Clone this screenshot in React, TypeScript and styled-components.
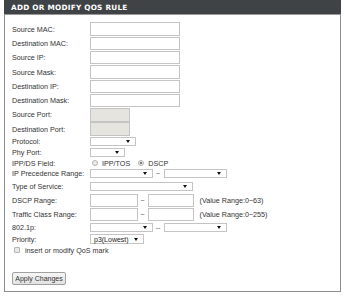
import { createGlobalStyle } from "styled-components";
import styled from "styled-components";

const GlobalStyle = createGlobalStyle`
    html, body {
        margin: 0;
        padding: 0;
        background: #ffffff;
    }
    body {
        font-family: "Liberation Sans", Arial, sans-serif;
        color: #333333;
    }
`;

const Wrapper = styled.div`
    width: 337px;
    margin-left: 4px;
`;

const Header = styled.div`
    height: 14px;
    background-color: #3f4346;
    border-bottom: 1px solid #9a9a9a;
    display: flex;
    align-items: center;
    padding-left: 7px;
    color: #ffffff;
    font-family: "DejaVu Sans", Verdana, sans-serif;
    font-weight: bold;
    font-size: 7.3px;
    letter-spacing: 0.25px;
`;

const Body = styled.div`
    border: 1px solid #8e8e8e;
    border-top: none;
    padding: 7px 0 6px 7px;
    display: flex;
    flex-direction: column;
`;

const Row = styled.div<{ $h: number }>`
    display: flex;
    align-items: center;
    height: ${(p) => p.$h}px;
    font-size: 7.2px;
`;

const Label = styled.div`
    width: 78px;
    flex-shrink: 0;
    white-space: nowrap;
`;

const TextInput = styled.input<{ $w: number; $h?: number; $disabled?: boolean }>`
    box-sizing: border-box;
    width: ${(p) => p.$w}px;
    height: ${(p) => p.$h ?? 13.5}px;
    margin: 0;
    padding: 0 2px;
    border: 1px solid #c4c4c4;
    background-color: ${(p) => (p.$disabled ? "#e6e4df" : "#ffffff")};
    font-size: 7px;
    outline: none;
`;

const SelectWrap = styled.div<{ $w: number; $h?: number }>`
    position: relative;
    box-sizing: border-box;
    width: ${(p) => p.$w}px;
    height: ${(p) => p.$h ?? 9}px;
    border: 1px solid #c4c4c4;
    background: #ffffff;
    display: flex;
    align-items: center;

    &::after {
        content: "";
        position: absolute;
        right: 5px;
        top: 50%;
        margin-top: -1.5px;
        border-left: 2px solid transparent;
        border-right: 2px solid transparent;
        border-top: 3px solid #111111;
    }
`;

const SelectText = styled.span`
    padding-left: 3px;
    font-size: 7px;
    color: #222222;
    line-height: 1;
`;

const Sep = styled.span<{ $w: number }>`
    width: ${(p) => p.$w}px;
    text-align: center;
    font-size: 7px;
    color: #555555;
`;

const Hint = styled.span`
    margin-left: 6px;
    white-space: nowrap;
`;

const Radio = styled.span<{ $checked?: boolean }>`
    box-sizing: border-box;
    width: 6px;
    height: 6px;
    border-radius: 50%;
    border: 1px solid #b5b5b5;
    background: #ececec;
    display: inline-flex;
    align-items: center;
    justify-content: center;
    margin: 0 4px 0 2px;

    &::before {
        content: "";
        width: 2px;
        height: 2px;
        border-radius: 50%;
        background: ${(p) => (p.$checked ? "#555555" : "transparent")};
    }
`;

const RadioText = styled.span`
    margin-right: 6px;
`;

const CheckBox = styled.span`
    box-sizing: border-box;
    width: 6px;
    height: 6px;
    border: 1px solid #b5b5b5;
    border-radius: 1px;
    background: #e8e8e8;
    margin: 0 5px 0 2px;
`;

const ButtonRow = styled.div`
    margin-top: 16.5px;
    display: flex;
    padding-left: 0;
`;

const Button = styled.button`
    box-sizing: border-box;
    width: 54px;
    height: 13px;
    margin: 0;
    padding: 0;
    border: 1px solid #a0a0a0;
    border-radius: 2px;
    background: linear-gradient(#f6f6f6, #e2e2e2);
    font-family: "Liberation Sans", Arial, sans-serif;
    font-size: 7px;
    color: #333333;
`;

const textRows = [
    "Source MAC:",
    "Destination MAC:",
    "Source IP:",
    "Source Mask:",
    "Destination IP:",
    "Destination Mask:",
];

export default function App() {
    return (
        <>
            <GlobalStyle />
            <Wrapper>
                <Header>ADD OR MODIFY QOS RULE</Header>
                <Body>
                    {textRows.map((label) => (
                        <Row $h={14.3} key={label}>
                            <Label>{label}</Label>
                            <TextInput $w={90} />
                        </Row>
                    ))}
                    <Row $h={14.3}>
                        <Label>Source Port:</Label>
                        <TextInput $w={40} $disabled disabled />
                    </Row>
                    <Row $h={14.3}>
                        <Label>Destination Port:</Label>
                        <TextInput $w={40} $disabled disabled />
                    </Row>
                    <Row $h={11}>
                        <Label>Protocol:</Label>
                        <SelectWrap $w={46} />
                    </Row>
                    <Row $h={11}>
                        <Label>Phy Port:</Label>
                        <SelectWrap $w={35} />
                    </Row>
                    <Row $h={10}>
                        <Label>IPP/DS Field:</Label>
                        <Radio />
                        <RadioText>IPP/TOS</RadioText>
                        <Radio $checked />
                        <RadioText>DSCP</RadioText>
                    </Row>
                    <Row $h={11}>
                        <Label>IP Precedence Range:</Label>
                        <SelectWrap $w={62.5} />
                        <Sep $w={11}>~</Sep>
                        <SelectWrap $w={63.5} />
                    </Row>
                    <Row $h={14.1}>
                        <Label>Type of Service:</Label>
                        <SelectWrap $w={103} $h={8.5} />
                    </Row>
                    <Row $h={14}>
                        <Label>DSCP Range:</Label>
                        <TextInput $w={47.5} $h={12.5} />
                        <Sep $w={10}>~</Sep>
                        <TextInput $w={46} $h={12.5} />
                        <Hint>(Value Range:0~63)</Hint>
                    </Row>
                    <Row $h={14}>
                        <Label>Traffic Class Range:</Label>
                        <TextInput $w={47.5} $h={12.5} />
                        <Sep $w={10}>~</Sep>
                        <TextInput $w={46} $h={12.5} />
                        <Hint>(Value Range:0~255)</Hint>
                    </Row>
                    <Row $h={11.5}>
                        <Label>802.1p:</Label>
                        <SelectWrap $w={62.5} />
                        <Sep $w={11}>--</Sep>
                        <SelectWrap $w={63.5} />
                    </Row>
                    <Row $h={12.5}>
                        <Label>Priority:</Label>
                        <SelectWrap $w={53.5} $h={9.5}>
                            <SelectText>p3(Lowest)</SelectText>
                        </SelectWrap>
                    </Row>
                    <Row $h={10}>
                        <CheckBox />
                        <span>insert or modify QoS mark</span>
                    </Row>
                    <ButtonRow>
                        <Button>Apply Changes</Button>
                    </ButtonRow>
                </Body>
            </Wrapper>
        </>
    );
}
